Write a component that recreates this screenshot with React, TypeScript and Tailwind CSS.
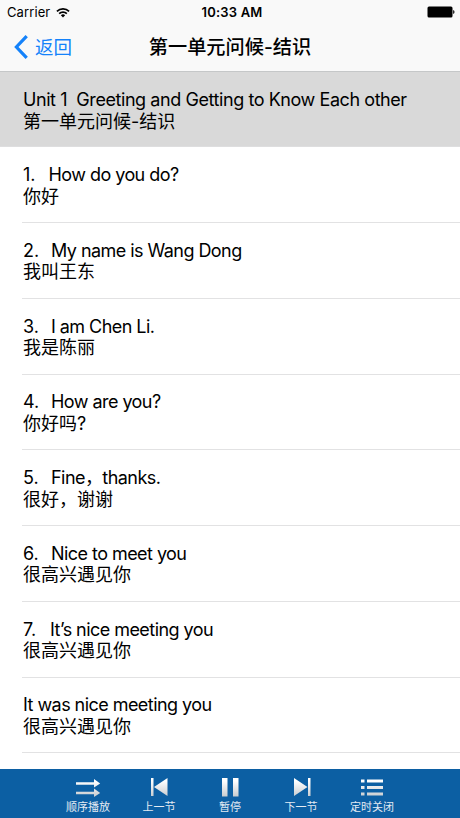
import React from 'react'

interface Sentence {
    no?: string
    noWidth?: string
    en: string
    zh: string
}

const sentences: Sentence[] = [
    { no: '1.', noWidth: 'w-[25.5px]', en: 'How do you do?', zh: '你好' },
    { no: '2.', noWidth: 'w-[28px]', en: 'My name is Wang Dong', zh: '我叫王东' },
    { no: '3.', noWidth: 'w-[28px]', en: 'I am Chen Li.', zh: '我是陈丽' },
    { no: '4.', noWidth: 'w-[28px]', en: 'How are you?', zh: '你好吗?' },
    { no: '5.', noWidth: 'w-[28px]', en: 'Fine，thanks.', zh: '很好，谢谢' },
    { no: '6.', noWidth: 'w-[28px]', en: 'Nice to meet you', zh: '很高兴遇见你' },
    { no: '7.', noWidth: 'w-[27px]', en: 'It’s nice meeting you', zh: '很高兴遇见你' },
    { en: 'It was nice meeting you', zh: '很高兴遇见你' },
]

const StatusBar = () => (
    <div className="grid h-[23px] grid-cols-3 items-center pl-[7px] pr-[5px] pt-px text-[13px] leading-none">
        <div className="flex items-center gap-[6px] tracking-[0.1px]">
            <span>Carrier</span>
            <svg width="14" height="11" viewBox="0 0 15 11" fill="none" stroke="#000" strokeWidth="1.9">
                <path d="M1 4.2a9.2 9.2 0 0 1 13 0" />
                <path d="M3.4 6.7a5.8 5.8 0 0 1 8.2 0" />
                <path d="M5.2 8.4a3.3 3.3 0 0 1 4.6 0L7.5 10.8z" fill="#000" stroke="none" />
            </svg>
        </div>
        <div className="pl-[2px] text-center font-semibold tracking-[0.2px]">10:33 AM</div>
        <div className="flex justify-end">
            <svg width="28" height="12" viewBox="0 0 28 12">
                <rect x="0.5" y="0.5" width="25" height="11" rx="1.5" />
                <path d="M26.2 4v4q1.3-.6 1.3-2t-1.3-2z" />
            </svg>
        </div>
    </div>
)

const NavBar = () => (
    <div className="grid h-12 grid-cols-[100px_1fr_100px] items-center">
        <button className="flex items-center gap-[7px] pl-[14px] text-[18.5px] leading-none text-[#1482fa]">
            <svg width="14" height="24" viewBox="0 0 14 24" fill="none" stroke="#1482fa" strokeWidth="3.2">
                <path d="M12.7 1.2 2.4 12l10.3 10.8" />
            </svg>
            返回
        </button>
        <h1 className="pt-[2px] text-center text-[19.2px] font-medium leading-none whitespace-nowrap">第一单元问候-结识</h1>
    </div>
)

const Row: React.FC<{ item: Sentence }> = ({ item }) => (
    <li className="ml-[22px] flex h-[75.75px] flex-col justify-center border-b border-[#e2e2e3] pl-[1px] pt-[3px]">
        <div className="flex h-[21px] items-center tracking-[-0.55px]">
            {item.no && <span className={`${item.noWidth} tracking-normal`}>{item.no}</span>}
            <span>{item.en}</span>
        </div>
        <div className="flex h-[22px] items-center">{item.zh}</div>
    </li>
)

const controls = [
    {
        label: '顺序播放',
        icon: (
            <>
                <path d="M0 5.2h18V2l6.200 4.500-6.200 4V7.700H0z" />
                <path d="M0 14.700h18v-3.200l6.200 4.500-6.200 4v-2.800H0z" />
            </>
        ),
    },
    {
        label: '上一节',
        icon: <path d="M4 1h2.500v18H4zM7 10 20.500 1v18z" />,
    },
    {
        label: '暂停',
        icon: <path d="M4 1h5.500v18.500H4zM15 1h5.500v18.500H15z" />,
    },
    {
        label: '下一节',
        icon: <path d="M21.500 1H19v18h2.500zM18.500 10 5 1v18z" />,
    },
    {
        label: '定时关闭',
        icon: <path d="M1 2.500h3.500v3H1zM7 2.500h16v3H7zM1 9h3.500v3H1zM7 9h16v3H7zM1 15.500h3.500v3H1zM7 15.500h16v3H7z" />,
    },
]

const PlayerBar = () => (
    <div className="flex h-[49px] justify-center bg-[#0c5fa3] pt-[8px] text-white">
        {controls.map((control) => (
            <button key={control.label} className="flex w-[71px] flex-col items-center">
                <svg width="25" height="20" viewBox="0 0 25 20" fill="url(#silver)">
                    {control.icon}
                </svg>
                <span className="mt-[4px] text-[11px] leading-[13px] text-[#e3ebf3]">{control.label}</span>
            </button>
        ))}
        <svg width="0" height="0" className="absolute">
            <linearGradient id="silver" gradientUnits="userSpaceOnUse" x1="0" y1="0" x2="0" y2="20">
                <stop offset="0.2" stopColor="#ffffff" />
                <stop offset="1" stopColor="#c6cace" />
            </linearGradient>
        </svg>
    </div>
)

const App = () => (
    <div className="flex h-[818px] w-[460px] flex-col overflow-hidden bg-white font-['Inter','Noto_Sans_CJK_SC',sans-serif] text-black">
        <header className="h-[71px] bg-[#f9f9f9]">
            <StatusBar />
            <NavBar />
        </header>
        <main className="flex-1 overflow-hidden text-[18px] leading-none">
            <div className="flex h-[76.3px] flex-col justify-center border-y border-t-[#c5c7c8] border-b-[#dededf] bg-[#d9d9d9] pl-[23px] pt-[3px]">
                <div className="flex h-[21px] items-center tracking-[-0.43px] whitespace-pre">Unit 1  Greeting and Getting to Know Each other</div>
                <div className="flex h-[22px] items-center pt-px">第一单元问候-结识</div>
            </div>
            <ul>
                {sentences.map((item) => (
                    <Row key={item.en} item={item} />
                ))}
            </ul>
        </main>
        <PlayerBar />
    </div>
)

export default App
